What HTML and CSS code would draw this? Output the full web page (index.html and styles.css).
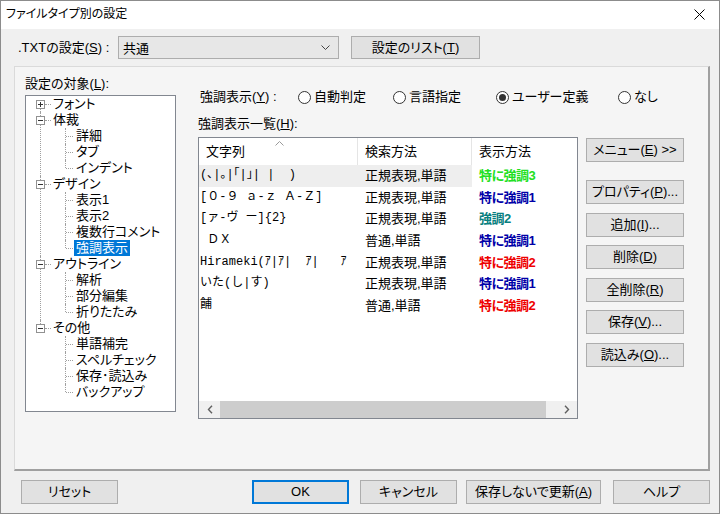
FILE: index.html
```html
<!DOCTYPE html>
<html lang="ja">
<head>
    <meta charset="UTF-8">
    <title>ファイルタイプ別の設定</title>
    <link rel="stylesheet" href="styles.css">
</head>
<body>
<div class="window">
    <div class="titlebar">
        <span class="title">ファイルタイプ別の設定</span>
        <svg class="close" width="11" height="11" viewBox="0 0 11 11"><path d="M0.5 0.5L10.5 10.5M10.5 0.5L0.5 10.5" stroke="#000" stroke-width="1"/></svg>
    </div>

    <div class="toprow">
        <span class="toplabel">.TXTの設定(<u>S</u>) :</span>
        <div class="combo">
            <span>共通</span>
            <svg width="9" height="5" viewBox="0 0 9 5"><path d="M0.5 0.5L4.5 4.5L8.5 0.5" stroke="#444" fill="none"/></svg>
        </div>
        <button class="btn list-btn">設定のリスト(<u>T</u>)</button>
    </div>

    <div class="panel">
        <div class="target">
            <div class="caption">設定の対象(<u>L</u>):</div>
            <div class="treebox">
                <ul class="tree">
                    <li>
                        <div class="row"><svg class="exp" width="9" height="9" viewBox="0 0 9 9"><rect x="0.5" y="0.5" width="8" height="8" fill="#fff" stroke="#919191"/><path d="M2 4.5H7M4.5 2V7" stroke="#333"/></svg><span>フォント</span></div>
                    </li>
                    <li>
                        <div class="row"><svg class="exp" width="9" height="9" viewBox="0 0 9 9"><rect x="0.5" y="0.5" width="8" height="8" fill="#fff" stroke="#919191"/><path d="M2 4.5H7" stroke="#333"/></svg><span>体裁</span></div>
                        <ul class="sub">
                            <li><div class="row"><span>詳細</span></div></li>
                            <li><div class="row"><span>タブ</span></div></li>
                            <li><div class="row"><span>インデント</span></div></li>
                        </ul>
                    </li>
                    <li>
                        <div class="row"><svg class="exp" width="9" height="9" viewBox="0 0 9 9"><rect x="0.5" y="0.5" width="8" height="8" fill="#fff" stroke="#919191"/><path d="M2 4.5H7" stroke="#333"/></svg><span>デザイン</span></div>
                        <ul class="sub">
                            <li><div class="row"><span>表示1</span></div></li>
                            <li><div class="row"><span>表示2</span></div></li>
                            <li><div class="row"><span>複数行コメント</span></div></li>
                            <li><div class="row"><span class="selected">強調表示</span></div></li>
                        </ul>
                    </li>
                    <li>
                        <div class="row"><svg class="exp" width="9" height="9" viewBox="0 0 9 9"><rect x="0.5" y="0.5" width="8" height="8" fill="#fff" stroke="#919191"/><path d="M2 4.5H7" stroke="#333"/></svg><span>アウトライン</span></div>
                        <ul class="sub">
                            <li><div class="row"><span>解析</span></div></li>
                            <li><div class="row"><span>部分編集</span></div></li>
                            <li><div class="row"><span>折りたたみ</span></div></li>
                        </ul>
                    </li>
                    <li>
                        <div class="row"><svg class="exp" width="9" height="9" viewBox="0 0 9 9"><rect x="0.5" y="0.5" width="8" height="8" fill="#fff" stroke="#919191"/><path d="M2 4.5H7" stroke="#333"/></svg><span>その他</span></div>
                        <ul class="sub">
                            <li><div class="row"><span>単語補完</span></div></li>
                            <li><div class="row"><span>スペルチェック</span></div></li>
                            <li><div class="row"><span>保存･読込み</span></div></li>
                            <li><div class="row"><span>バックアップ</span></div></li>
                        </ul>
                    </li>
                </ul>
            </div>
        </div>

        <div class="highlight">
            <div class="radios">
                <span>強調表示(<u>Y</u>) :</span>
                <label class="radio"><svg width="13" height="13" viewBox="0 0 13 13"><circle cx="6.5" cy="6.5" r="6" fill="#fff" stroke="#333"/></svg>自動判定</label>
                <label class="radio"><svg width="13" height="13" viewBox="0 0 13 13"><circle cx="6.5" cy="6.5" r="6" fill="#fff" stroke="#333"/></svg>言語指定</label>
                <label class="radio"><svg width="13" height="13" viewBox="0 0 13 13"><circle cx="6.5" cy="6.5" r="6" fill="#fff" stroke="#333"/><circle cx="6.5" cy="6.5" r="3.5" fill="#333"/></svg>ユーザー定義</label>
                <label class="radio"><svg width="13" height="13" viewBox="0 0 13 13"><circle cx="6.5" cy="6.5" r="6" fill="#fff" stroke="#333"/></svg>なし</label>
            </div>
            <div class="caption list-caption">強調表示一覧(<u>H</u>):</div>

            <div class="listarea">
                <div class="listview">
                    <div class="lv-head">
                        <div class="c1">文字列<svg class="sort" width="9" height="5" viewBox="0 0 9 5"><path d="M0.5 4.5L4.5 0.5L8.5 4.5" stroke="#9a9a9a" fill="none"/></svg></div>
                        <div class="c2">検索方法</div>
                        <div class="c3">表示方法</div>
                    </div>
                    <div class="lv-body">
                        <div class="lv-row hot">
                            <div class="c1 mono">(､|｡|｢|｣| |  )</div>
                            <div class="c2">正規表現,単語</div>
                            <div class="c3 em green">特に強調3</div>
                        </div>
                        <div class="lv-row">
                            <div class="c1 mono">[０-９ ａ-ｚ Ａ-Ｚ]</div>
                            <div class="c2">正規表現,単語</div>
                            <div class="c3 em navy">特に強調1</div>
                        </div>
                        <div class="lv-row">
                            <div class="c1 mono">[ァ-ヴ ー]{2}</div>
                            <div class="c2">正規表現,単語</div>
                            <div class="c3 em teal">強調2</div>
                        </div>
                        <div class="lv-row">
                            <div class="c1 mono"> ＤＸ</div>
                            <div class="c2">普通,単語</div>
                            <div class="c3 em navy">特に強調1</div>
                        </div>
                        <div class="lv-row">
                            <div class="c1 mono">Hirameki(ｱ|ｱ|  ｱ|   ｱ</div>
                            <div class="c2">正規表現,単語</div>
                            <div class="c3 em red">特に強調2</div>
                        </div>
                        <div class="lv-row">
                            <div class="c1 mono">いた(し|す)</div>
                            <div class="c2">正規表現,単語</div>
                            <div class="c3 em navy">特に強調1</div>
                        </div>
                        <div class="lv-row">
                            <div class="c1 mono">餔</div>
                            <div class="c2">普通,単語</div>
                            <div class="c3 em red">特に強調2</div>
                        </div>
                    </div>
                    <div class="hscroll">
                        <div class="arrow"><svg width="6" height="9" viewBox="0 0 6 9"><path d="M5 0.8L1.5 4.5L5 8.2" stroke="#606060" stroke-width="1.4" fill="none"/></svg></div>
                        <div class="track"><div class="thumb"></div></div>
                        <div class="arrow"><svg width="6" height="9" viewBox="0 0 6 9"><path d="M1 0.8L4.5 4.5L1 8.2" stroke="#606060" stroke-width="1.4" fill="none"/></svg></div>
                    </div>
                </div>

                <div class="sidebtns">
                    <button class="btn menu-btn">メニュー(<u>E</u>) &gt;&gt;</button>
                    <button class="btn">プロパティ(<u>P</u>)...</button>
                    <button class="btn">追加(<u>I</u>)...</button>
                    <button class="btn">削除(<u>D</u>)</button>
                    <button class="btn">全削除(<u>R</u>)</button>
                    <button class="btn">保存(<u>V</u>)...</button>
                    <button class="btn">読込み(<u>O</u>)...</button>
                </div>
            </div>
        </div>
    </div>

    <div class="bottom">
        <button class="btn reset">リセット</button>
        <button class="btn ok">OK</button>
        <button class="btn cancel">キャンセル</button>
        <button class="btn apply">保存しないで更新(<u>A</u>)</button>
        <button class="btn help">ヘルプ</button>
    </div>
</div>
</body>
</html>
```

FILE: styles.css
```css
body {
    margin: 0;
    background-color: #f0f0f0;
    font-family: "Liberation Sans", "Noto Sans CJK JP", sans-serif;
    font-size: 13px;
    font-feature-settings: "palt";
    color: #000;
}
u {
    text-underline-offset: 1px;
}
.window {
    width: 720px;
    height: 514px;
    box-sizing: border-box;
    border: 1px solid #8c8c8c;
}
.titlebar {
    height: 28px;
    background-color: #fff;
    display: flex;
    align-items: center;
    justify-content: space-between;
    padding: 0 14px 2px 5px;
    box-sizing: border-box;
}
.title {
    font-size: 12px;
    line-height: 16px;
}

/* top row */
.toprow {
    display: flex;
    align-items: center;
    height: 23px;
    margin-top: 7px;
    padding-left: 17px;
}
.toplabel {
    width: 100px;
    line-height: 16px;
}
.combo {
    width: 221px;
    height: 23px;
    box-sizing: border-box;
    border: 1px solid #adadad;
    background-color: #e7e7e7;
    display: flex;
    align-items: center;
    justify-content: space-between;
    padding: 0 8px 0 4px;
    margin-right: 12px;
}
.btn {
    height: 24px;
    box-sizing: border-box;
    border: 1px solid #adadad;
    background-color: #e1e1e1;
    font-family: "Liberation Sans", "Noto Sans CJK JP", sans-serif;
    font-size: 13px;
    font-feature-settings: "palt";
    color: #000;
    padding: 0;
    line-height: 20px;
    white-space: nowrap;
}
.list-btn {
    width: 129px;
    height: 23px;
}

/* panel */
.panel {
    margin: 7px 0 0 13px;
    width: 696px;
    height: 405px;
    box-sizing: border-box;
    border: 1px solid #dadada;
    border-right: 2px solid #a0a0a0;
    border-bottom: 2px solid #a0a0a0;
    background-color: #f5f5f5;
    display: flex;
}
.caption {
    line-height: 16px;
    height: 16px;
}
.target {
    margin-left: 10px;
    padding-top: 9px;
}
.treebox {
    margin-top: 3px;
    width: 151px;
    height: 317px;
    box-sizing: border-box;
    border: 1px solid #828790;
    background-color: #fff;
    overflow: hidden;
}

/* tree */
.tree, .sub {
    list-style: none;
    margin: 0;
    padding: 0;
}
.tree li {
    position: relative;
}
.tree li::after {
    content: '';
    position: absolute;
    top: 0;
    bottom: 0;
    left: 14px;
    border-left: 1px dotted #a0a0a0;
}
.tree > li:first-child::after {
    top: 8px;
}
.tree > li:last-child::after,
.sub > li:last-child::after {
    bottom: auto;
    height: 8px;
}
.sub > li::after {
    left: 39px;
}
.row {
    position: relative;
    height: 16px;
    line-height: 16px;
    padding-left: 25px;
    white-space: nowrap;
}
.row::before {
    content: '';
    position: absolute;
    left: 19px;
    top: 8px;
    width: 6px;
    border-top: 1px dotted #a0a0a0;
}
.sub .row {
    padding-left: 48px;
}
.sub .row::before {
    left: 40px;
    width: 7px;
}
.row span {
    display: inline-block;
    height: 16px;
    line-height: 16px;
    vertical-align: top;
    padding: 0 2px;
}
.row .selected {
    background-color: #0078d7;
    color: #fff;
}
.exp {
    position: absolute;
    left: 10px;
    top: 4px;
    z-index: 1;
}

/* highlight side */
.highlight {
    margin-left: 22px;
    padding-top: 22px;
}
.radios {
    display: grid;
    grid-template-columns: 98px 95px 103px 122px auto;
    align-items: center;
    height: 16px;
    line-height: 16px;
    padding-left: 2px;
}
.radio {
    display: flex;
    align-items: center;
    gap: 3px;
}
.list-caption {
    margin-top: 11px;
}
.listarea {
    display: flex;
    margin-top: 5px;
    gap: 8px;
}
.listview {
    width: 380px;
    height: 282px;
    box-sizing: border-box;
    border: 1px solid #828790;
    background-color: #fff;
    display: flex;
    flex-direction: column;
}
.lv-head {
    display: flex;
    height: 27px;
    line-height: 27px;
}
.lv-head > div {
    box-sizing: border-box;
    border-right: 1px solid #e5e5e5;
    padding-left: 7px;
}
.lv-head .c1 {
    position: relative;
    padding-left: 7px;
}
.lv-head .c3 {
    border-right: none;
}
.sort {
    position: absolute;
    left: 76px;
    top: 3px;
}
.c1 {
    width: 159px;
    flex: none;
    box-sizing: border-box;
}
.c2 {
    width: 114px;
    flex: none;
    box-sizing: border-box;
    padding-left: 7px;
}
.c3 {
    flex: 1;
    padding-left: 7px;
}
.lv-row {
    display: flex;
    height: 21.7px;
    line-height: 21.7px;
    white-space: nowrap;
}
.lv-row .c1 {
    padding-left: 1px;
    overflow: hidden;
}
.lv-row.hot .c1,
.lv-row.hot .c2 {
    background-color: #eeeeee;
}
.mono {
    font-family: "Liberation Mono", "Noto Sans CJK JP", monospace;
    font-size: 12px;
    font-feature-settings: normal;
    white-space: pre;
}
.em {
    font-weight: bold;
    letter-spacing: -0.5px;
}
.green { color: #22e022; }
.navy { color: #0000a8; }
.teal { color: #088080; }
.red { color: #ee0000; }

.hscroll {
    margin-top: auto;
    height: 17px;
    display: flex;
    background-color: #f0f0f0;
}
.arrow {
    width: 21px;
    display: flex;
    align-items: center;
    justify-content: center;
}
.track {
    flex: 1;
}
.thumb {
    width: 326px;
    height: 17px;
    background-color: #cdcdcd;
}

.sidebtns {
    display: flex;
    flex-direction: column;
    gap: 8.6px;
    padding-top: 1px;
}
.sidebtns .btn {
    width: 98px;
}
.sidebtns .menu-btn {
    margin-bottom: 9.4px;
}

/* bottom buttons */
.bottom {
    display: flex;
    margin-top: 9px;
    padding-left: 20px;
}
.reset { width: 97px; }
.ok {
    width: 97px;
    margin-left: 134px;
    border: 1px solid #0078d7;
    box-shadow: inset 0 0 0 1px #0078d7;
}
.cancel { width: 97px; margin-left: 11px; }
.apply { width: 135px; margin-left: 9px; }
.help { width: 97px; margin-left: 12px; }
```
